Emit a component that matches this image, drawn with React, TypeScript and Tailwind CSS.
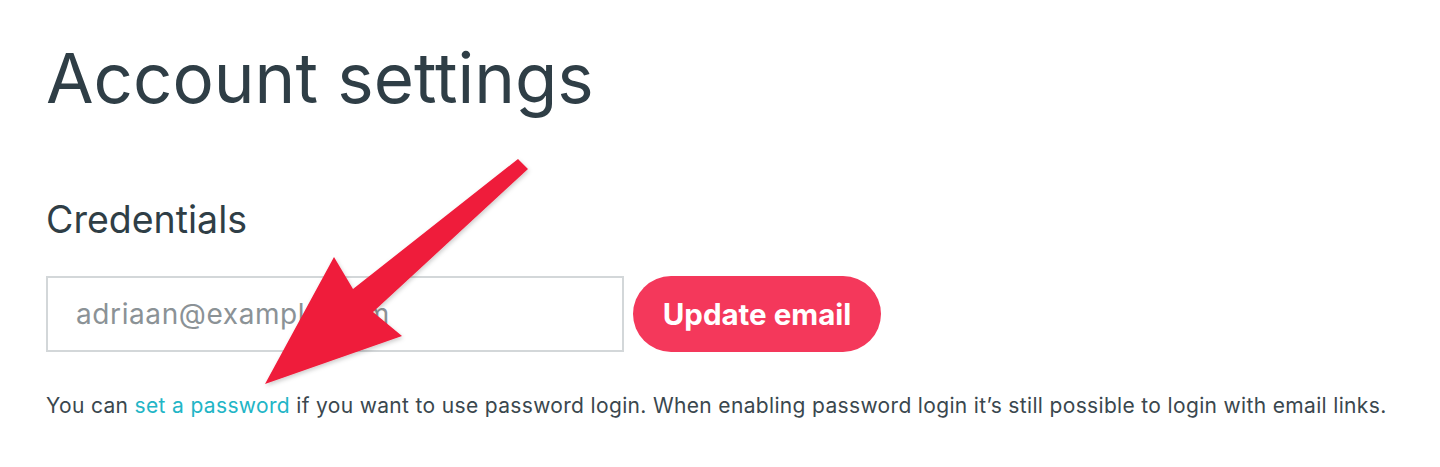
import React from "react";

export default function App() {
  return (
    <div
      className="relative w-[1440px] h-[467px] bg-white overflow-hidden"
      style={{ fontFamily: "Inter, 'Noto Sans', sans-serif" }}
    >
      <div className="pl-[46px] pt-[36px]">
        <h1 className="text-[69px] leading-[84px] font-normal text-[#2f3e46] tracking-[0px]">
          Account settings
        </h1>
        <h2 className="mt-[78px] text-[37.5px] leading-[44px] font-normal text-[#2f3e46]">
          Credentials
        </h2>
        <div className="mt-[34px] flex items-center gap-[9px]">
          <div className="w-[578px] h-[76px] border-2 border-[#d3d7d9] flex items-center pl-[28px]">
            <span className="text-[28px] tracking-[0.6px] text-[#8b9296]">adriaan@example.com</span>
          </div>
          <button className="w-[248px] h-[76px] rounded-full bg-[#f4385b] text-white text-[29.5px] font-bold">
            Update email
          </button>
        </div>
        <p className="mt-[41px] text-[21px] leading-[26px] tracking-[0.34px] text-[#3a474e]">
          You can <span className="text-[#22b5c6]">set a password</span> if you want to use password login. When
          enabling password login it’s still possible to login with email links.
        </p>
      </div>
      <svg
        className="absolute left-0 top-0 pointer-events-none"
        width="1440"
        height="467"
        viewBox="0 0 1440 467"
      >
        <defs>
          <filter id="sh" x="-20%" y="-20%" width="140%" height="140%">
            <feDropShadow dx="1" dy="2" stdDeviation="2" floodColor="#000" floodOpacity="0.2" />
          </filter>
        </defs>
        <polygon
          points="518,159 528,169 373,312 402,336 265,384 334,257 353,289"
          fill="#ef1b3a"
          filter="url(#sh)"
        />
      </svg>
    </div>
  );
}
